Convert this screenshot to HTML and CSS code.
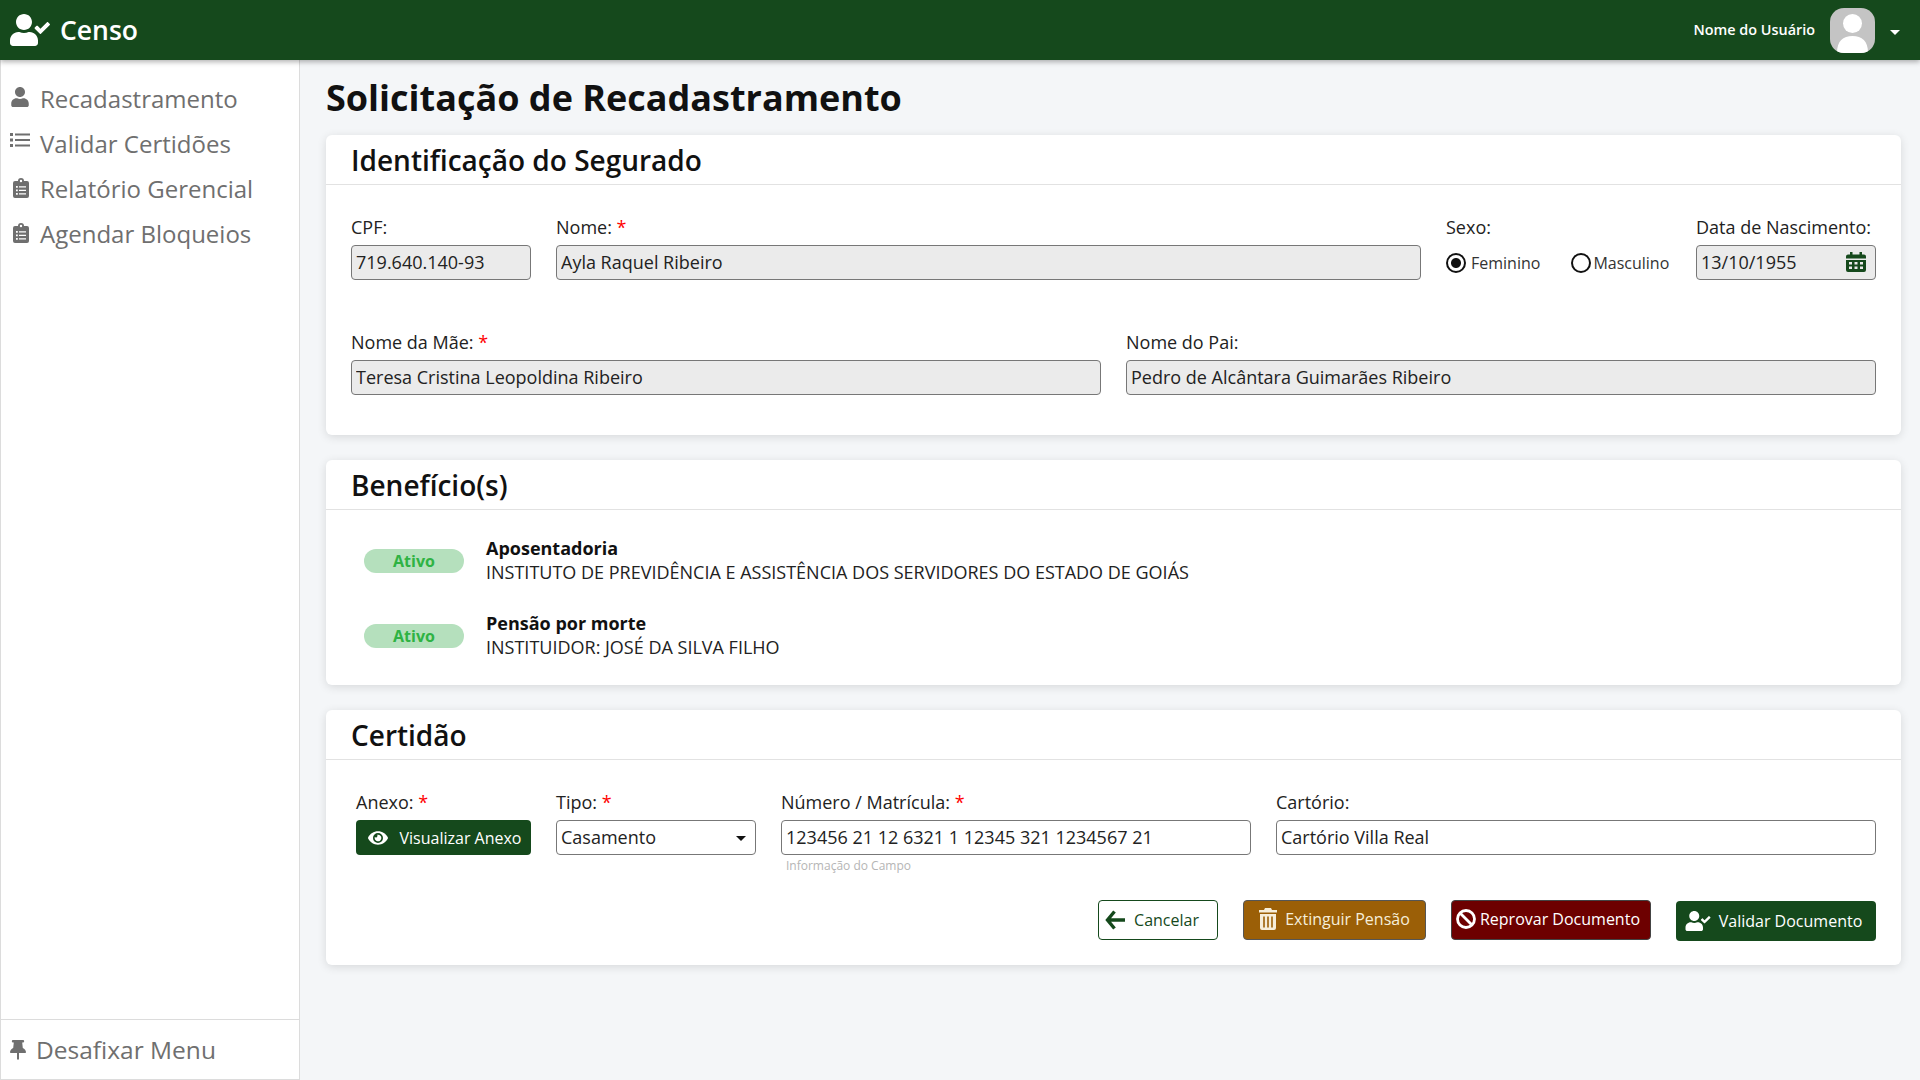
FILE: index.html
```html
<!DOCTYPE html>
<html lang="pt-BR">
<head>
  <meta charset="UTF-8">
  <title>Censo</title>
  <link rel="stylesheet" href="styles.css">
</head>
<body>
  <svg class="defs" width="0" height="0">
    <defs>
      <symbol id="i-user-check" viewBox="0 0 640 512"><path d="M224 256c70.700 0 128-57.300 128-128S294.700 0 224 0 96 57.300 96 128s57.300 128 128 128zm89.600 32h-16.700c-22.200 10.200-46.900 16-72.900 16s-50.600-5.800-72.900-16h-16.700C60.200 288 0 348.200 0 422.400V464c0 26.500 21.500 48 48 48h352c26.500 0 48-21.500 48-48v-41.600c0-74.200-60.200-134.400-134.400-134.400zm323-128.400l-27.800-28.100c-4.600-4.700-12.100-4.700-16.800-.1l-104.800 104-45.500-45.800c-4.600-4.700-12.100-4.700-16.800-.1l-28.100 27.900c-4.700 4.600-4.700 12.100-.1 16.800l81.700 82.300c4.600 4.700 12.100 4.700 16.800.1l141.300-140.200c4.600-4.700 4.700-12.200.1-16.800z"/></symbol>
      <symbol id="i-user" viewBox="0 0 448 512"><path d="M224 256c70.700 0 128-57.300 128-128S294.700 0 224 0 96 57.300 96 128s57.300 128 128 128zm89.600 32h-16.700c-22.200 10.200-46.900 16-72.900 16s-50.600-5.800-72.900-16h-16.700C60.200 288 0 348.200 0 422.400V464c0 26.500 21.500 48 48 48h352c26.500 0 48-21.500 48-48v-41.600c0-74.200-60.200-134.400-134.400-134.400z"/></symbol>
      <symbol id="i-list" viewBox="0 0 20 16"><path d="M0 1h3v3H0zM0 6.500h3v3H0zM0 12h3v3H0zM5 1.500h15v2H5zM5 7h15v2H5zM5 12.500h15v2H5z"/></symbol>
      <symbol id="i-clipboard" viewBox="0 0 16 20"><path fill-rule="evenodd" d="M2 3h3a3 3 0 0 1 6 0h3a2 2 0 0 1 2 2v13a2 2 0 0 1-2 2H2a2 2 0 0 1-2-2V5a2 2 0 0 1 2-2zm6-1.200a1.200 1.200 0 1 0 0 2.400 1.200 1.200 0 0 0 0-2.400zM3 8v1.800h1.800V8zm3 .2v1.400h7V8.200zM3 11.500v1.800h1.800v-1.800zm3 .2v1.400h7v-1.400zM3 15v1.800h1.800V15zm3 .2v1.400h7v-1.400z"/></symbol>
      <symbol id="i-pin" viewBox="0 0 16 20"><path d="M3 0h10a1 1 0 0 1 0 2.400h-.8l.6 5.600C14.600 9 16 10.500 16 12.200a.8.800 0 0 1-.8.800H9v6l-1 1-1-1v-6H.8a.8.800 0 0 1-.8-.8C0 10.500 1.400 9 3.200 8l.6-5.600H3A1 1 0 0 1 3 0z"/></symbol>
      <symbol id="i-calendar" viewBox="0 0 20 20"><path fill-rule="evenodd" d="M4 0h2.500v2.500h7V0H16v2.500h2a2 2 0 0 1 2 2V6.500H0V4.500a2 2 0 0 1 2-2h2zM0 8h20v10a2 2 0 0 1-2 2H2a2 2 0 0 1-2-2zm3 2v2.500h3V10zm5.500 0v2.500h3V10zM14 10v2.500h3V10zM3 14.500V17h3v-2.500zm5.500 0V17h3v-2.500zm5.500 0V17h3v-2.500z"/></symbol>
      <symbol id="i-eye" viewBox="0 0 576 512"><path d="M572.520 241.400C518.290 135.590 410.930 64 288 64S57.680 135.640 3.480 241.410a32.350 32.350 0 0 0 0 29.190C57.710 376.410 165.070 448 288 448s230.320-71.640 284.520-177.410a32.350 32.350 0 0 0 0-29.190zM288 400a144 144 0 1 1 144-144 143.930 143.930 0 0 1-144 144zm0-240a95.310 95.310 0 0 0-25.310 3.790 47.850 47.850 0 0 1-66.900 66.900A95.780 95.780 0 1 0 288 160z"/></symbol>
      <symbol id="i-arrow" viewBox="0 0 20 20"><path d="M9.500 1.500 2.500 10l7 8.500M3 10h17" fill="none" stroke="currentColor" stroke-width="3.400"/></symbol>
      <symbol id="i-trash" viewBox="0 0 18 22"><path fill-rule="evenodd" d="M6 0h6l1 2h5v2.500H0V2h5zM1 6h16v14a2 2 0 0 1-2 2H3a2 2 0 0 1-2-2zm3.200 2.500v11h1.600v-11zm4 0v11h1.600v-11zm4 0v11h1.600v-11z"/></symbol>
      <symbol id="i-ban" viewBox="0 0 20 20"><circle cx="10" cy="10" r="8.500" fill="none" stroke="currentColor" stroke-width="2.800"/><path d="M4 4l12 12" stroke="currentColor" stroke-width="2.800"/></symbol>
    </defs>
  </svg>

  <header class="topbar">
    <div class="brand">
      <svg class="brand-icon"><use href="#i-user-check"/></svg>
      <span>Censo</span>
    </div>
    <div class="user-menu">
      <span class="user-name">Nome do Usuário</span>
      <span class="avatar">
        <svg viewBox="0 0 45 45"><circle cx="22.500" cy="15.500" r="9.500"/><path d="M7 45c0-12 6-17 15.500-17S38 33 38 45z"/></svg>
      </span>
      <span class="caret caret-white"></span>
    </div>
  </header>

  <div class="layout">
    <aside class="sidebar">
      <nav class="nav">
        <a class="nav-item"><svg class="nav-icon icon-user"><use href="#i-user"/></svg>Recadastramento</a>
        <a class="nav-item"><svg class="nav-icon icon-list"><use href="#i-list"/></svg>Validar Certidões</a>
        <a class="nav-item"><svg class="nav-icon icon-clip"><use href="#i-clipboard"/></svg>Relatório Gerencial</a>
        <a class="nav-item"><svg class="nav-icon icon-clip"><use href="#i-clipboard"/></svg>Agendar Bloqueios</a>
      </nav>
      <div class="sidebar-foot"><svg class="pin-icon"><use href="#i-pin"/></svg>Desafixar Menu</div>
    </aside>

    <main class="content">
      <h1 class="page-title">Solicitação de Recadastramento</h1>

      <section class="card">
        <h2 class="card-title">Identificação do Segurado</h2>
        <div class="card-body card-body-id">
          <div class="form-row">
            <div class="field w-180">
              <label>CPF:</label>
              <input class="input" disabled value="719.640.140-93">
            </div>
            <div class="field grow">
              <label>Nome: <b class="req">*</b></label>
              <input class="input" disabled value="Ayla Raquel Ribeiro">
            </div>
            <div class="field w-225">
              <label>Sexo:</label>
              <div class="radios">
                <label class="radio"><input type="radio" name="sexo" checked><span>Feminino</span></label>
                <label class="radio radio-m"><input type="radio" name="sexo"><span>Masculino</span></label>
              </div>
            </div>
            <div class="field w-180">
              <label>Data de Nascimento:</label>
              <div class="input-wrap">
                <input class="input" disabled value="13/10/1955">
                <svg class="calendar"><use href="#i-calendar"/></svg>
              </div>
            </div>
          </div>
          <div class="form-row row-2">
            <div class="field half">
              <label>Nome da Mãe: <b class="req">*</b></label>
              <input class="input" disabled value="Teresa Cristina Leopoldina Ribeiro">
            </div>
            <div class="field half">
              <label>Nome do Pai:</label>
              <input class="input" disabled value="Pedro de Alcântara Guimarães Ribeiro">
            </div>
          </div>
        </div>
      </section>

      <section class="card">
        <h2 class="card-title">Benefício(s)</h2>
        <div class="card-body card-body-ben">
          <div class="benefit">
            <span class="badge">Ativo</span>
            <div class="benefit-text">
              <strong>Aposentadoria</strong>
              <span>INSTITUTO DE PREVIDÊNCIA E ASSISTÊNCIA DOS SERVIDORES DO ESTADO DE GOIÁS</span>
            </div>
          </div>
          <div class="benefit">
            <span class="badge">Ativo</span>
            <div class="benefit-text">
              <strong>Pensão por morte</strong>
              <span>INSTITUIDOR: JOSÉ DA SILVA FILHO</span>
            </div>
          </div>
        </div>
      </section>

      <section class="card">
        <h2 class="card-title">Certidão</h2>
        <div class="card-body card-body-cert">
          <div class="form-row">
            <div class="field w-175 anexo">
              <label>Anexo: <b class="req">*</b></label>
              <button class="btn btn-green btn-anexo" type="button"><svg class="eye"><use href="#i-eye"/></svg>Visualizar Anexo</button>
            </div>
            <div class="field w-200">
              <label>Tipo: <b class="req">*</b></label>
              <div class="input-wrap">
                <input class="input input-white" value="Casamento">
                <span class="caret caret-dark"></span>
              </div>
            </div>
            <div class="field w-470">
              <label>Número / Matrícula: <b class="req">*</b></label>
              <input class="input input-white" value="123456 21 12 6321 1 12345 321 1234567 21">
              <small class="hint">Informação do Campo</small>
            </div>
            <div class="field grow">
              <label>Cartório:</label>
              <input class="input input-white" value="Cartório Villa Real">
            </div>
          </div>
          <div class="actions">
            <button class="btn btn-outline btn-cancel" type="button"><svg class="ic-arrow"><use href="#i-arrow"/></svg>Cancelar</button>
            <button class="btn btn-amber btn-ext" type="button"><svg class="ic-trash"><use href="#i-trash"/></svg>Extinguir Pensão</button>
            <button class="btn btn-red btn-rep" type="button"><svg class="ic-ban"><use href="#i-ban"/></svg>Reprovar Documento</button>
            <button class="btn btn-green btn-val" type="button"><svg class="ic-val"><use href="#i-user-check"/></svg>Validar Documento</button>
          </div>
        </div>
      </section>
    </main>
  </div>
</body>
</html>
```

FILE: styles.css
```css
* {
  box-sizing: border-box;
}
html, body {
  height: 100%;
}
body {
  margin: 0;
  background: #f4f6f8;
  color: #111;
  font-family: "Open Sans", "Noto Sans", sans-serif;
  font-size: 18px;
  overflow: hidden;
}
svg {
  fill: currentColor;
  flex: none;
}
.defs {
  display: block;
  height: 0;
}

/* top bar */
.topbar {
  position: relative;
  z-index: 2;
  display: flex;
  align-items: center;
  justify-content: space-between;
  height: 60px;
  padding: 0 20px 0 10px;
  background: #15491c;
  color: #fff;
  box-shadow: 0 2px 5px rgba(0, 0, 0, 0.3);
}
.brand {
  display: flex;
  align-items: center;
  gap: 10px;
  font-size: 26.500px;
  font-weight: 600;
}
.brand-icon {
  width: 40px;
  height: 32px;
}
.user-menu {
  display: flex;
  align-items: center;
}
.user-name {
  font-size: 14.400px;
  font-weight: 600;
  margin-right: 15px;
  position: relative;
  top: -1px;
}
.avatar {
  display: block;
  width: 45px;
  height: 45px;
  border-radius: 14px;
  overflow: hidden;
  background: #c4c4c4;
  margin-right: 15px;
}
.avatar svg {
  display: block;
  width: 45px;
  height: 45px;
  fill: #fff;
}
.caret {
  display: block;
  width: 0;
  height: 0;
  border-left: 5px solid transparent;
  border-right: 5px solid transparent;
  border-top: 5px solid #111;
}
.caret-white {
  border-top-color: #fff;
  margin-top: 4px;
}

/* layout */
.layout {
  display: flex;
  height: 1020px;
}
.sidebar {
  display: flex;
  flex-direction: column;
  justify-content: space-between;
  width: 300px;
  flex: none;
  background: #fff;
  border: 1px solid #dcdcdc;
  border-top: none;
  color: #6f6f6f;
}
.nav {
  padding-top: 16px;
}
.nav-item {
  display: flex;
  align-items: center;
  height: 45px;
  padding-left: 9px;
  font-size: 24px;
}
.nav-icon {
  margin-right: 10px;
}
.icon-user {
  width: 20px;
  height: 20px;
  margin-bottom: 3px;
}
.icon-list {
  width: 20px;
  height: 16px;
  margin-bottom: 8px;
}
.icon-clip {
  width: 16px;
  height: 20px;
  margin-left: 3px;
  margin-right: 11px;
  margin-bottom: 2px;
}
.sidebar-foot {
  display: flex;
  align-items: center;
  height: 60px;
  padding-left: 9px;
  font-size: 24.500px;
  border-top: 1px solid #dcdcdc;
}
.pin-icon {
  width: 16px;
  height: 20px;
  margin-right: 10px;
}

/* content */
.content {
  flex: 1;
  padding: 14px 19px 0 26px;
}
.page-title {
  margin: 0 0 13px;
  font-size: 36px;
  line-height: 48px;
  font-weight: 700;
}
.card {
  background: #fff;
  border-radius: 6px;
  box-shadow: 0 2px 10px rgba(0, 0, 0, 0.12);
  margin-bottom: 25px;
}
.card-title {
  margin: 0;
  height: 50px;
  padding: 0 25px;
  font-size: 28px;
  line-height: 51px;
  font-weight: 600;
  border-bottom: 1px solid #e2e2e2;
}
.card-body-id {
  padding: 30px 25px 40px;
}
.card-body-ben {
  padding: 27px 25px 25px 38px;
}
.card-body-cert {
  padding: 30px 25px 25px;
}
.form-row {
  display: flex;
  gap: 25px;
}
.row-2 {
  margin-top: 50px;
}
.field {
  display: flex;
  flex-direction: column;
  min-width: 0;
  position: relative;
}
.field > label {
  display: block;
  height: 30px;
  line-height: 24px;
  font-size: 18px;
  color: #222;
}
.grow {
  flex: 1;
}
.half {
  flex: 1;
}
.w-180 {
  width: 180px;
}
.w-225 {
  width: 225px;
}
.w-175 {
  width: 175px;
}
.w-200 {
  width: 200px;
}
.w-470 {
  width: 470px;
}
.anexo {
  margin-left: 5px;
}
.req {
  color: #f00;
  font-weight: 400;
}
.input {
  display: block;
  width: 100%;
  height: 35px;
  padding: 0 4px 2px;
  border: 1px solid #777;
  border-radius: 4px;
  background: #ebebeb;
  color: #222;
  font-family: inherit;
  font-size: 18px;
}
.input:disabled {
  opacity: 1;
}
.input-white {
  background: #fff;
}
.input-wrap {
  position: relative;
}
.calendar {
  position: absolute;
  top: 7px;
  right: 10px;
  width: 20px;
  height: 20px;
  color: #15491c;
}
.input-wrap .caret-dark {
  position: absolute;
  top: 16px;
  right: 10px;
}
.hint {
  position: absolute;
  top: 67px;
  left: 5px;
  font-size: 12px;
  color: #b5b5b5;
  white-space: nowrap;
}

/* radios */
.radios {
  display: flex;
  align-items: center;
  height: 35px;
}
.radio {
  display: flex;
  align-items: center;
  font-size: 16px;
  color: #333;
}
.radio-m {
  margin-left: 31px;
}
.radio input {
  appearance: none;
  display: block;
  width: 20px;
  height: 20px;
  margin: 0 5px 0 0;
  border: 2.500px solid #111;
  border-radius: 50%;
  background: #fff;
}
.radio-m input {
  margin-right: 2px;
}
.radio input:checked {
  background: radial-gradient(circle, #111 0 4.500px, #fff 5.500px);
}

/* benefits */
.benefit {
  display: flex;
  align-items: center;
  height: 48px;
}
.benefit + .benefit {
  margin-top: 27px;
}
.badge {
  width: 100px;
  height: 24px;
  margin-right: 22px;
  border-radius: 12px;
  background: #b5e0bd;
  color: #2fb344;
  font-size: 16px;
  font-weight: 700;
  line-height: 25px;
  text-align: center;
}
.benefit-text {
  display: flex;
  flex-direction: column;
  margin-top: -3px;
  font-size: 18px;
  line-height: 24px;
  color: #222;
}
.benefit-text strong {
  color: #111;
}

/* buttons */
.btn {
  display: inline-flex;
  align-items: center;
  justify-content: center;
  border: 1px solid transparent;
  border-radius: 4px;
  font-family: inherit;
  font-size: 16px;
  padding: 0;
  color: #fff;
  white-space: nowrap;
}
.btn-green {
  background: #15491c;
}
.btn-amber {
  background: #9b5f07;
  border-color: #555;
  color: #f6eeda;
}
.btn-red {
  background: #6d0000;
  border-color: #444;
}
.btn-outline {
  background: #fff;
  border-color: #15491c;
  color: #15491c;
}
.btn-anexo {
  width: 175px;
  height: 35px;
  gap: 12px;
  padding-left: 2px;
}
.eye {
  width: 20px;
  height: 18px;
}
.actions {
  display: flex;
  justify-content: flex-end;
  gap: 25px;
  margin-top: 45px;
}
.actions .btn {
  height: 40px;
}
.btn-cancel {
  width: 120px;
  gap: 9px;
  padding-right: 12px;
}
.btn-ext {
  width: 183px;
  gap: 8px;
  padding-bottom: 2px;
}
.btn-rep {
  width: 200px;
  gap: 4px;
  padding-right: 6px;
  padding-bottom: 2px;
}
.btn-val {
  width: 200px;
  gap: 8px;
  padding-right: 5px;
  position: relative;
  top: 1px;
}
.ic-arrow {
  width: 20px;
  height: 20px;
}
.ic-trash {
  width: 18px;
  height: 22px;
}
.ic-ban {
  width: 20px;
  height: 20px;
}
.ic-val {
  width: 26px;
  height: 20px;
}
```
